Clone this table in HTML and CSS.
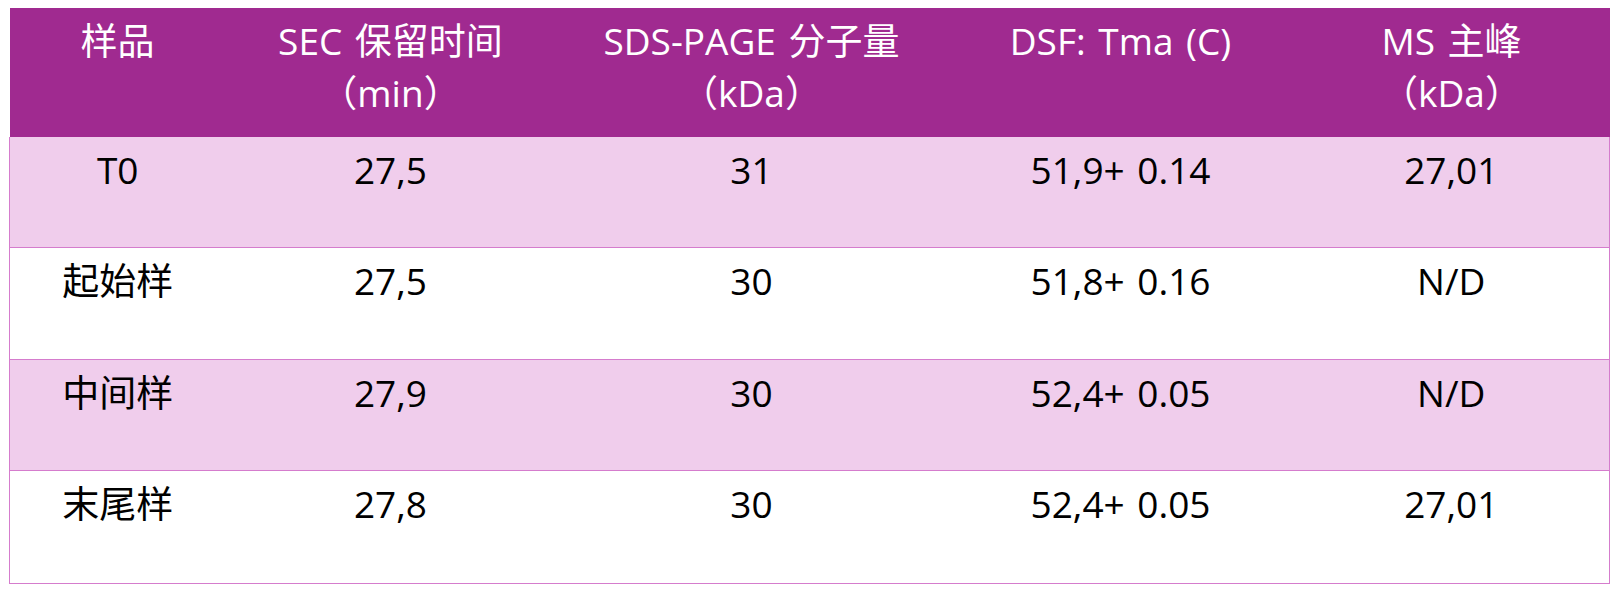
FILE: index.html
```html
<!DOCTYPE html>
<html lang="zh-CN">
<head>
<meta charset="utf-8">
<title>样品数据表</title>
<link rel="stylesheet" href="styles.css">
</head>
<body>
<table class="data">
  <colgroup>
    <col class="c1"><col class="c2"><col class="c3"><col class="c4"><col class="c5">
  </colgroup>
  <thead>
    <tr class="head">
      <th>样品</th>
      <th>SEC 保留时间<br>（min）</th>
      <th>SDS-PAGE 分子量<br>（kDa）</th>
      <th>DSF: Tma (C)</th>
      <th>MS 主峰<br>（kDa）</th>
    </tr>
  </thead>
  <tbody>
    <tr class="row shade r1">
      <td>T0</td><td>27,5</td><td>31</td><td>51,9+ 0.14</td><td>27,01</td>
    </tr>
    <tr class="row r2">
      <td>起始样</td><td>27,5</td><td>30</td><td>51,8+ 0.16</td><td>N/D</td>
    </tr>
    <tr class="row shade r3">
      <td>中间样</td><td>27,9</td><td>30</td><td>52,4+ 0.05</td><td>N/D</td>
    </tr>
    <tr class="row r4">
      <td>末尾样</td><td>27,8</td><td>30</td><td>52,4+ 0.05</td><td>27,01</td>
    </tr>
  </tbody>
</table>
</body>
</html>
```

FILE: styles.css
```css
html, body {
  margin: 0;
  padding: 0;
  background: #ffffff;
}

body {
  padding: 8px 0 0 9px;
  font-family: "Open Sans", "Noto Sans CJK SC", sans-serif;
}

.data {
  border-collapse: collapse;
  table-layout: fixed;
  width: 1600px;
  font-size: 37px;
  line-height: 53px;
  word-spacing: 3px;
}

.c1 { width: 216px; }
.c2 { width: 330px; }
.c3 { width: 392px; }
.c4 { width: 346px; }
.c5 { width: 316px; }

.data th,
.data td {
  text-align: center;
  vertical-align: top;
  padding: 8px 0 0 0;
  font-weight: normal;
}

.head th {
  background: #a02a90;
  color: #ffffff;
  height: 122px;
  padding-top: 7px;
  line-height: 52px;
}

.row td {
  color: #000000;
  background: #ffffff;
  border-bottom: 1px solid #d57ccd;
  padding-top: 6px;
}

.row td:first-child {
  border-left: 1px solid #d57ccd;
}

.row td:last-child {
  border-right: 1px solid #d57ccd;
}

.row.shade td {
  background: #f0cdec;
}

.r1 td { height: 104px; }
.r2 td { height: 105px; }
.r3 td { height: 104px; }
.r4 td { height: 106px; }
```
